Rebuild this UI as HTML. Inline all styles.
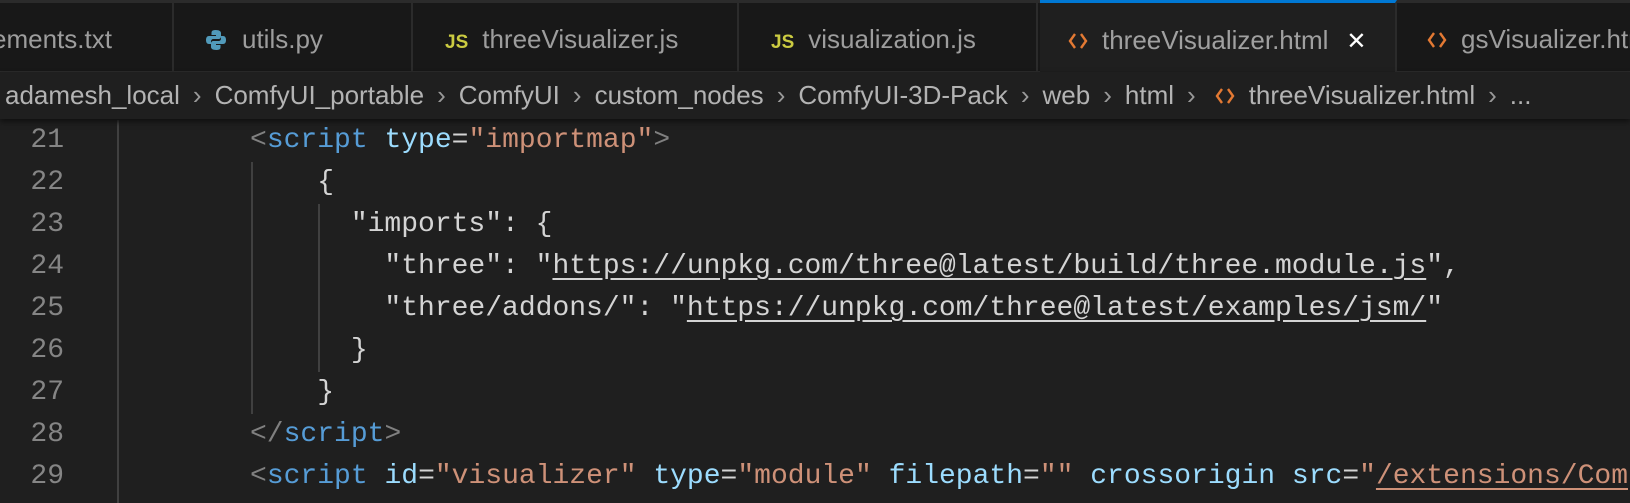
<!DOCTYPE html>
<html><head><meta charset="utf-8"><style>
body{margin:0;width:1630px;height:500px;background:#1f1f1f;overflow:hidden;position:relative;font-family:"Liberation Sans",sans-serif}
#tabs{position:absolute;left:0;top:0;width:1630px;height:72px;background:#181818;border-top:3px solid #2b2b2b;box-sizing:border-box;border-bottom:1px solid #2b2b2b}
.tab{position:absolute;top:0;height:69px;border-right:2px solid #2b2b2b;color:#9d9d9d;font-size:26px;line-height:72px;white-space:nowrap;overflow:hidden}
.tab.active{background:#1f1f1f;border-top:3px solid #0078d4;top:-3px;height:75px;line-height:75px;color:#a0a0a0}
.js{color:#cbcb41;font-weight:bold;font-size:19px;margin-right:14px}
.ht{display:inline-block;vertical-align:-3px;margin-right:14px}
#bc{position:absolute;left:0;top:72px;width:1630px;height:47px;background:#1f1f1f;box-shadow:0 3px 5px #111;color:#b3b3b3;font-size:26px;line-height:47px;white-space:nowrap;z-index:2}
.sep{color:#999;margin:0 13px}
#code{position:absolute;left:0;top:120px;font-family:"Liberation Mono",monospace;font-size:28px}
.ln{position:absolute;left:0;width:64px;text-align:right;color:#858585;height:42px;line-height:42px}
.cl{position:absolute;left:250px;white-space:pre;color:#d4d4d4;height:42px;line-height:42px}
.g{position:absolute;width:2px;background:#404040}
.t{color:#808080}.n{color:#569cd6}.a{color:#9cdcfe}.s{color:#ce9178}.u{text-decoration:underline;text-underline-offset:5px}
</style></head><body>
<div id="tabs">
<div class="tab" style="left:0;width:172px;padding-left:0"><span style="margin-left:-8px">ements.txt</span></div>
<div class="tab" style="left:174px;width:239px;padding-left:30px;box-sizing:border-box"><svg width="24" height="24" viewBox="0 0 24 24" style="vertical-align:-4px;margin-right:14px"><path d="M11.5 2c-4 0-4 2-4 3v2h4.5v1H5c-2 0-3 1.5-3 4s1 4 3 4h2v-2.5c0-1.5 1-2.5 2.5-2.5h5c1.5 0 2.5-1 2.5-2.5V5c0-1.5-1.5-3-5.5-3z" fill="#519aba"/><path d="M12.5 22c4 0 4-2 4-3v-2H12v-1h7c2 0 3-1.5 3-4s-1-4-3-4h-2v2.5c0 1.5-1 2.5-2.5 2.5h-5C8 13 7 14 7 15.5V19c0 1.5 1.5 3 5.5 3z" fill="#519aba"/></svg>utils.py</div>
<div class="tab" style="left:415px;width:324px;padding-left:30px;box-sizing:border-box"><span class="js">JS</span>threeVisualizer.js</div>
<div class="tab" style="left:741px;width:297px;padding-left:30px;box-sizing:border-box"><span class="js">JS</span>visualization.js</div>
<div class="tab active" style="left:1040px;width:357px;padding-left:28px;box-sizing:border-box"><svg class="ht" width="20" height="22" viewBox="0 0 20 22"><path d="M7 4L2 11l5 7M13 4l5 7-5 7" stroke="#e37933" stroke-width="2.4" fill="none"/></svg>threeVisualizer.html<span style="color:#fff;margin-left:18px;font-size:24px">✕</span></div>
<div class="tab" style="left:1399px;width:240px;padding-left:28px;box-sizing:border-box;border:none"><svg class="ht" width="20" height="22" viewBox="0 0 20 22"><path d="M7 4L2 11l5 7M13 4l5 7-5 7" stroke="#e37933" stroke-width="2.4" fill="none"/></svg>gsVisualizer.html</div>
</div>
<div id="bc"><span style="margin-left:5px">adamesh_local</span><span class="sep">›</span>ComfyUI_portable<span class="sep">›</span>ComfyUI<span class="sep">›</span>custom_nodes<span class="sep">›</span>ComfyUI-3D-Pack<span class="sep">›</span>web<span class="sep">›</span>html<span class="sep">›</span><svg class="ht" width="20" height="22" viewBox="0 0 20 22" style="margin-left:6px"><path d="M7 4L2 11l5 7M13 4l5 7-5 7" stroke="#e37933" stroke-width="2.4" fill="none"/></svg>threeVisualizer.html<span class="sep">›</span>...</div>
<div id="code">
<div class="g" style="left:117px;top:0;height:383px"></div>
<div class="g" style="left:251px;top:42px;height:252px"></div>
<div class="g" style="left:318px;top:84px;height:168px"></div>
<div class="ln" style="top:0">21</div><div class="cl" style="top:0"><span class="t">&lt;</span><span class="n">script</span> <span class="a">type</span>=<span class="s">"importmap"</span><span class="t">&gt;</span></div>
<div class="ln" style="top:42px">22</div><div class="cl" style="top:42px">    {</div>
<div class="ln" style="top:84px">23</div><div class="cl" style="top:84px">      "imports": {</div>
<div class="ln" style="top:126px">24</div><div class="cl" style="top:126px">        "three": "<span class="u">https://unpkg.com/three@latest/build/three.module.js</span>",</div>
<div class="ln" style="top:168px">25</div><div class="cl" style="top:168px">        "three/addons/": "<span class="u">https://unpkg.com/three@latest/examples/jsm/</span>"</div>
<div class="ln" style="top:210px">26</div><div class="cl" style="top:210px">      }</div>
<div class="ln" style="top:252px">27</div><div class="cl" style="top:252px">    }</div>
<div class="ln" style="top:294px">28</div><div class="cl" style="top:294px"><span class="t">&lt;/</span><span class="n">script</span><span class="t">&gt;</span></div>
<div class="ln" style="top:336px">29</div><div class="cl" style="top:336px"><span class="t">&lt;</span><span class="n">script</span> <span class="a">id</span>=<span class="s">"visualizer"</span> <span class="a">type</span>=<span class="s">"module"</span> <span class="a">filepath</span>=<span class="s">""</span> <span class="a">crossorigin</span> <span class="a">src</span>=<span class="s">"<span class="u">/extensions/Com</span></span></div>
</div>
</body></html>
